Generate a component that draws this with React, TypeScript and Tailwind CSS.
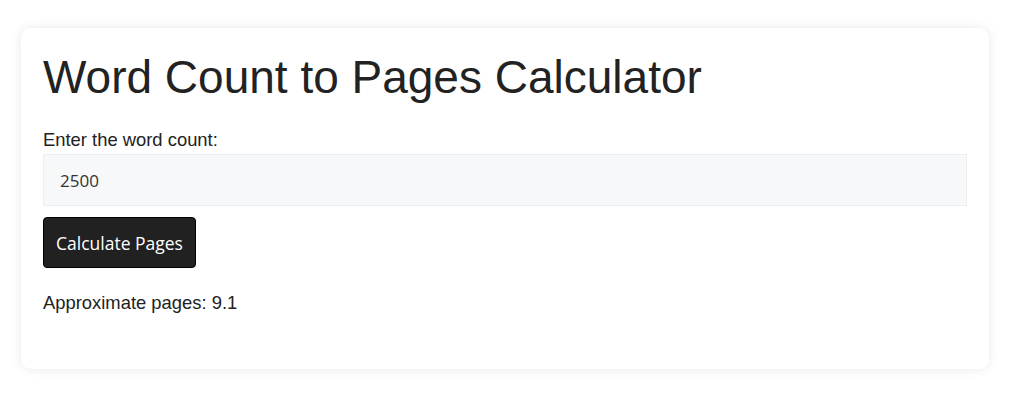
import React, { useState } from "react";

export default function App() {
  const [words, setWords] = useState("2500");
  const [pages, setPages] = useState<string>("9.1");

  const calculate = () => {
    const n = parseInt(words, 10);
    if (!isNaN(n)) setPages((n / 275).toFixed(1));
  };

  return (
    <div className="min-h-[411px] bg-white pt-[28px] font-['Liberation_Sans',Arial,sans-serif] text-[#222]">
      <div className="ml-[21px] w-[968px] rounded-[10px] bg-white px-[22px] pt-[22px] pb-[56px] shadow-[0_0_12px_rgba(0,0,0,0.09)]">
        <h1 className="mb-6 text-[46px] leading-[1.2] font-normal">Word Count to Pages Calculator</h1>

        <label htmlFor="words" className="block text-[18.4px] leading-[21px]">
          Enter the word count:
        </label>
        <input
          id="words"
          type="text"
          value={words}
          onChange={(e) => setWords(e.target.value)}
          className="mt-1 block h-[52px] w-full border border-[#edeef0] bg-[#f7f8f9] px-4 font-['Open_Sans',sans-serif] text-[17px] text-[#333] outline-none"
        />

        <button
          onClick={calculate}
          className="mt-[11px] h-[51px] rounded-[4px] border border-black bg-[#212121] px-3 font-['Open_Sans',sans-serif] text-[17.5px] text-white"
        >
          Calculate Pages
        </button>

        <p className="mt-6 text-[18.4px] leading-[21px]">Approximate pages: {pages}</p>
      </div>
    </div>
  );
}
